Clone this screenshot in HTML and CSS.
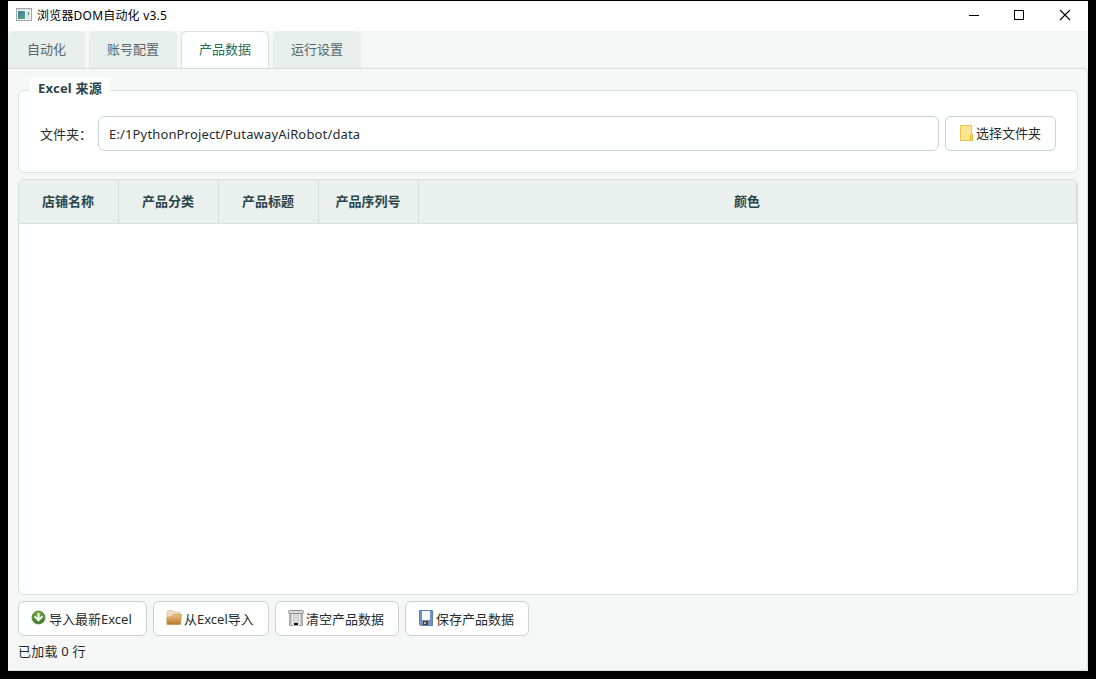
FILE: index.html
```html
<!DOCTYPE html>
<html lang="zh-CN">
<head>
  <meta charset="UTF-8">
  <title>浏览器DOM自动化 v3.5</title>
  <link rel="stylesheet" href="styles.css">
</head>
<body>
  <div class="window">
    <header class="titlebar">
      <svg class="app-icon" width="16" height="14" viewBox="0 0 16 14">
        <defs>
          <linearGradient id="screen" x1="0" y1="0" x2="1" y2="1">
            <stop offset="0" stop-color="#3f78a8"/>
            <stop offset="1" stop-color="#58a878"/>
          </linearGradient>
        </defs>
        <rect x="0.5" y="0.5" width="15" height="12" fill="#f4f5f6" stroke="#a1a7ab"/>
        <path d="M1 1.5h14" stroke="#d5d9dc"/>
        <rect x="2" y="3" width="7" height="8" fill="url(#screen)"/>
        <rect x="10" y="3" width="4" height="8" fill="#dfe3e5"/>
        <path d="M12 4h1v3h-1z" fill="#4a9a6a"/>
      </svg>
      <span class="app-title">浏览器DOM自动化 v3.5</span>
      <div class="controls">
        <svg width="46" height="30" viewBox="0 0 46 30"><path d="M19 14.5h10" stroke="#000"/></svg>
        <svg width="46" height="30" viewBox="0 0 46 30"><rect x="18.5" y="9.5" width="9" height="9" fill="none" stroke="#000"/></svg>
        <svg width="46" height="30" viewBox="0 0 46 30"><path d="M18 9l10 10M28 9l-10 10" stroke="#000" stroke-width="1.1"/></svg>
      </div>
    </header>

    <nav class="tabs">
      <div class="tab first">自动化</div>
      <div class="tab">账号配置</div>
      <div class="tab active">产品数据</div>
      <div class="tab">运行设置</div>
    </nav>

    <main class="pane">
      <section class="group">
        <h2 class="group-title">Excel 来源</h2>
        <label class="folder-label" for="folder">文件夹：</label>
        <input class="folder-input" type="text" id="folder" value="E:/1PythonProject/PutawayAiRobot/data">
        <button class="btn browse">
          <svg width="16" height="16" viewBox="0 0 16 16">
            <path d="M2.5 0.5h11v9h1v6h-12z" fill="#ffe591" stroke="#e9c34c"/>
            <path d="M12.5 15.5v-5l1-1h1v6z" fill="#ffe591" stroke="#e0b52f"/>
          </svg>
          <span>选择文件夹</span>
        </button>
      </section>

      <section class="table">
        <div class="table-head">
          <div>店铺名称</div>
          <div>产品分类</div>
          <div>产品标题</div>
          <div>产品序列号</div>
          <div>颜色</div>
        </div>
      </section>

      <div class="actions">
        <button class="btn import">
          <svg width="16" height="16" viewBox="0 0 16 16">
            <defs>
              <linearGradient id="green" x1="0" y1="0" x2="0" y2="1">
                <stop offset="0" stop-color="#75ad45"/>
                <stop offset="1" stop-color="#3c7a22"/>
              </linearGradient>
            </defs>
            <circle cx="7.5" cy="7.5" r="6.5" fill="url(#green)" stroke="#477b30" stroke-width="0.8"/>
            <path d="M6.5 3h2v4.800l2.300-2 1.200 1.300-4.500 4.600-4.500-4.600 1.200-1.300 2.300 2z" fill="#fff"/>
          </svg>
          <span>导入最新Excel</span>
        </button>
        <button class="btn open">
          <svg width="16" height="16" viewBox="0 0 16 16">
            <defs>
              <linearGradient id="folderFront" x1="0" y1="0" x2="0" y2="1">
                <stop offset="0" stop-color="#ecc283"/>
                <stop offset="1" stop-color="#b47827"/>
              </linearGradient>
            </defs>
            <path d="M1 14V2l1-1.500h4.500l1 1.500h6.500v3" fill="#eddcc2" stroke="#dcc5a2" stroke-width="0.8"/>
            <path d="M1 14.500V7.500l5-1 1.500-2h8l-1 10z" fill="url(#folderFront)" stroke="#bd873f" stroke-width="0.6"/>
          </svg>
          <span>从Excel导入</span>
        </button>
        <button class="btn clear">
          <svg width="16" height="16" viewBox="0 0 16 16">
            <defs>
              <linearGradient id="metal">
                <stop offset="0" stop-color="#999"/>
                <stop offset="0.25" stop-color="#f2f2f2"/>
                <stop offset="0.5" stop-color="#cfcfcf"/>
                <stop offset="0.75" stop-color="#f2f2f2"/>
                <stop offset="1" stop-color="#999"/>
              </linearGradient>
            </defs>
            <path d="M1.5 3.5h13v12h-13z" fill="url(#metal)" stroke="#a0a0a0" stroke-width="0.8"/>
            <path d="M5.5 4v9M10.5 4v9" stroke="#c4c4c4"/>
            <rect x="0.5" y="0.5" width="15" height="3" rx="1" fill="#dcdcdc" stroke="#8c8c8c"/>
            <rect x="6" y="13" width="4" height="2" fill="#111"/>
          </svg>
          <span>清空产品数据</span>
        </button>
        <button class="btn save">
          <svg width="16" height="16" viewBox="0 0 16 16">
            <path d="M1.5 0.5h13v15h-12l-1-1z" fill="#6e94c6" stroke="#5c82b5"/>
            <rect x="4" y="1" width="8" height="9" fill="#f5f7fa"/>
            <rect x="4" y="11" width="8" height="4" fill="#8d949d"/>
            <rect x="5" y="11" width="5" height="4" fill="#444"/>
            <rect x="6" y="12" width="2" height="2" fill="#bbb"/>
          </svg>
          <span>保存产品数据</span>
        </button>
      </div>
      <p class="status">已加载 0 行</p>
    </main>
  </div>
</body>
</html>
```
FILE: styles.css
```css
* {
  box-sizing: border-box;
}
body {
  margin: 0;
  height: 679px;
  padding: 1px 8px 8px;
  background: #000;
  overflow: hidden;
  font-family: "Noto Sans", "Noto Sans CJK SC", sans-serif;
  font-size: 13px;
  color: #1f2d2f;
}
.window {
  display: flex;
  flex-direction: column;
  height: 670px;
  background: #f4f7f6;
}

/* title bar */
.titlebar {
  display: flex;
  align-items: center;
  height: 30px;
  padding-left: 8px;
  background: #fff;
  color: #000;
}
.app-icon {
  margin-bottom: 2px;
}
.app-title {
  margin-left: 5px;
  padding-bottom: 2px;
  font-size: 12px;
  letter-spacing: 0.2px;
}
.controls {
  display: flex;
  margin-left: auto;
}
.controls svg {
  display: block;
}

/* tabs */
.tabs {
  display: flex;
  gap: 4px;
  height: 37px;
}
.tab {
  width: 88px;
  border-radius: 6px 6px 0 0;
  background: #e8eeec;
  color: #56666a;
  line-height: 37px;
  text-align: center;
}
.tab.first {
  width: 77px;
}
.tab.active {
  border: 1px solid #d5dfdc;
  border-bottom: none;
  background: #fff;
  color: #1c6e60;
  line-height: 35px;
}
.pane {
  flex: 1;
  display: flex;
  flex-direction: column;
  padding: 21px 9px 0 10px;
  border: 1px solid #d5dfdc;
  border-left: none;
  border-radius: 0 4px 4px 0;
}

/* excel source */
.group {
  position: relative;
  display: flex;
  align-items: center;
  height: 83px;
  padding: 3px 21px 0;
  border: 1px solid #d9e2df;
  border-radius: 6px;
  background: #fff;
}
.group-title {
  position: absolute;
  left: 11px;
  top: -13px;
  width: 80px;
  height: 20px;
  margin: 0;
  background: #fff;
  color: #2b4448;
  font-size: 13px;
  line-height: 20px;
  letter-spacing: 0.2px;
  text-align: center;
}
.folder-label {
  width: 58px;
  white-space: nowrap;
}
.folder-input {
  flex: 1;
  height: 35px;
  margin-right: 6px;
  padding: 1px 10px 0;
  border: 1px solid #c8d4d1;
  border-radius: 6px;
  background: #fff;
  color: inherit;
  font: inherit;
  letter-spacing: 0.15px;
}
.btn {
  display: flex;
  align-items: center;
  height: 35px;
  padding: 0 0 0 12px;
  border: 1px solid #c8d4d1;
  border-radius: 6px;
  background: #fff;
  color: inherit;
  font: inherit;
  white-space: nowrap;
}
.btn svg {
  flex: none;
  margin: 0 2px 1px 0;
}
.btn span {
  padding-bottom: 1px;
}
.browse {
  width: 111px;
}

/* product table */
.table {
  height: 416px;
  margin-top: 6px;
  border: 1px solid #d5dfdc;
  border-radius: 6px;
  background: #fff;
  overflow: hidden;
}
.table-head {
  display: grid;
  grid-template-columns: repeat(4, 100px) 1fr;
  height: 44px;
  border-bottom: 1px solid #d5dfdc;
  background: #eaf0ee;
  color: #2b4448;
  font-weight: bold;
  line-height: 43px;
  text-align: center;
}
.table-head div {
  padding-right: 1px;
  border-right: 1px solid #d5dfdc;
}

/* bottom buttons */
.actions {
  display: flex;
  gap: 6px;
  margin-top: 6px;
}
.import {
  width: 129px;
}
.open {
  width: 116px;
}
.clear,
.save {
  width: 124px;
}
.status {
  margin: 5px 0 0;
  line-height: 20px;
  letter-spacing: 0.2px;
}
```
